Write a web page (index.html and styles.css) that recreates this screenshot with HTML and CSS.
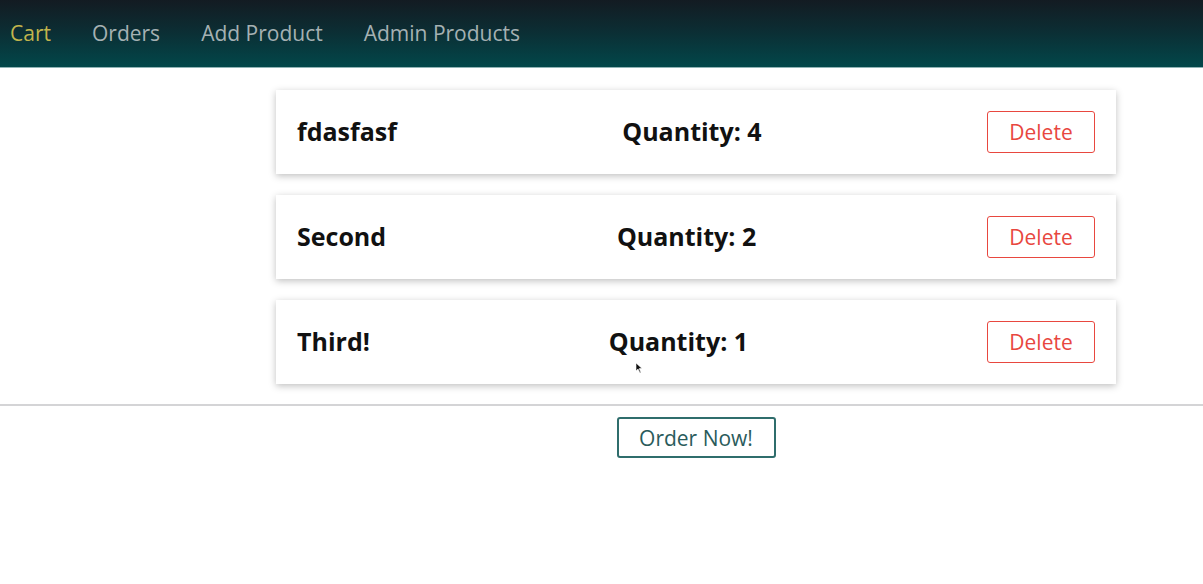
FILE: index.html
```html
<!DOCTYPE html>
<html lang="en">
<head>
<meta charset="utf-8">
<title>Cart</title>
<link rel="stylesheet" href="styles.css">
</head>
<body>
<div class="page">
  <header class="header">
    <nav class="nav">
      <ul class="nav-list">
        <li><a class="nav-link active" href="#">Cart</a></li>
        <li><a class="nav-link" href="#">Orders</a></li>
        <li><a class="nav-link" href="#">Add Product</a></li>
        <li><a class="nav-link" href="#">Admin Products</a></li>
      </ul>
    </nav>
  </header>
  <main class="main">
    <ul class="cart-list">
      <li class="cart-item">
        <h1 class="item-title">fdasfasf</h1>
        <h2 class="item-qty">Quantity: 4</h2>
        <button class="btn btn-danger">Delete</button>
      </li>
      <li class="cart-item">
        <h1 class="item-title">Second</h1>
        <h2 class="item-qty">Quantity: 2</h2>
        <button class="btn btn-danger">Delete</button>
      </li>
      <li class="cart-item">
        <h1 class="item-title">Third!</h1>
        <h2 class="item-qty">Quantity: 1</h2>
        <button class="btn btn-danger">Delete</button>
      </li>
    </ul>
    <hr class="divider">
    <div class="actions">
      <button class="btn btn-order">Order Now!</button>
    </div>
  </main>
</div>
<svg class="cursor" width="8" height="12" viewBox="0 0 8 12"><path d="M1 1 L1 9 L3 7 L5 11 L6 10.5 L4.2 6.6 L7 6.4 Z" fill="#111" stroke="#fff" stroke-width="0.6"/></svg>
</body>
</html>
```

FILE: styles.css
```css
html, body {
  margin: 0;
  padding: 0;
  background: #ffffff;
  overflow: hidden;
}

body {
  font-family: "Open Sans", "Noto Sans", sans-serif;
  position: relative;
  height: 584px;
}

.page {
  width: 1392px;
}

.header {
  height: 68px;
  background: linear-gradient(to bottom, #131b22 0%, #0c2d33 45%, #02474a 100%);
  border-bottom: 1px solid #8fb3b5;
  box-sizing: border-box;
  display: flex;
  align-items: center;
  padding-left: 10px;
}

.nav-list {
  list-style: none;
  margin: 0;
  padding: 0;
  display: flex;
  gap: 41px;
}

.nav-link {
  text-decoration: none;
  color: #a5b1b3;
  font-size: 21px;
  line-height: 28px;
  display: block;
  margin-top: -2px;
}

.nav-link.active {
  color: #c2b54d;
}

.main {
  padding-top: 22px;
}

.cart-list {
  list-style: none;
  margin: 0 auto;
  padding: 0;
  width: 840px;
  display: flex;
  flex-direction: column;
  gap: 21px;
}

.cart-item {
  height: 84px;
  box-sizing: border-box;
  padding: 0 21px;
  display: flex;
  align-items: center;
  justify-content: space-between;
  background: #fff;
  box-shadow: 0 2px 7px rgba(0, 0, 0, 0.25);
}

.item-title,
.item-qty {
  margin: 0 0 3px;
  font-size: 25px;
  font-weight: 700;
  color: #111;
}

.btn {
  font-family: inherit;
  background: #fff;
  cursor: pointer;
  border-radius: 3px;
  box-sizing: border-box;
  padding: 0;
}

.btn-danger {
  width: 108px;
  height: 42px;
  border: 1px solid #e8473f;
  color: #e8473f;
  font-size: 21px;
}

.divider {
  margin: 20px 0 0;
  border: 0;
  border-top: 2px solid #d4d4d6;
  height: 0;
}

.actions {
  display: flex;
  justify-content: center;
  padding-top: 11px;
}

.btn-order {
  width: 159px;
  height: 41px;
  border: 2px solid #2f6d6c;
  color: #2a5b5b;
  font-size: 21px;
}

.cursor {
  position: absolute;
  left: 635px;
  top: 362px;
}
```
